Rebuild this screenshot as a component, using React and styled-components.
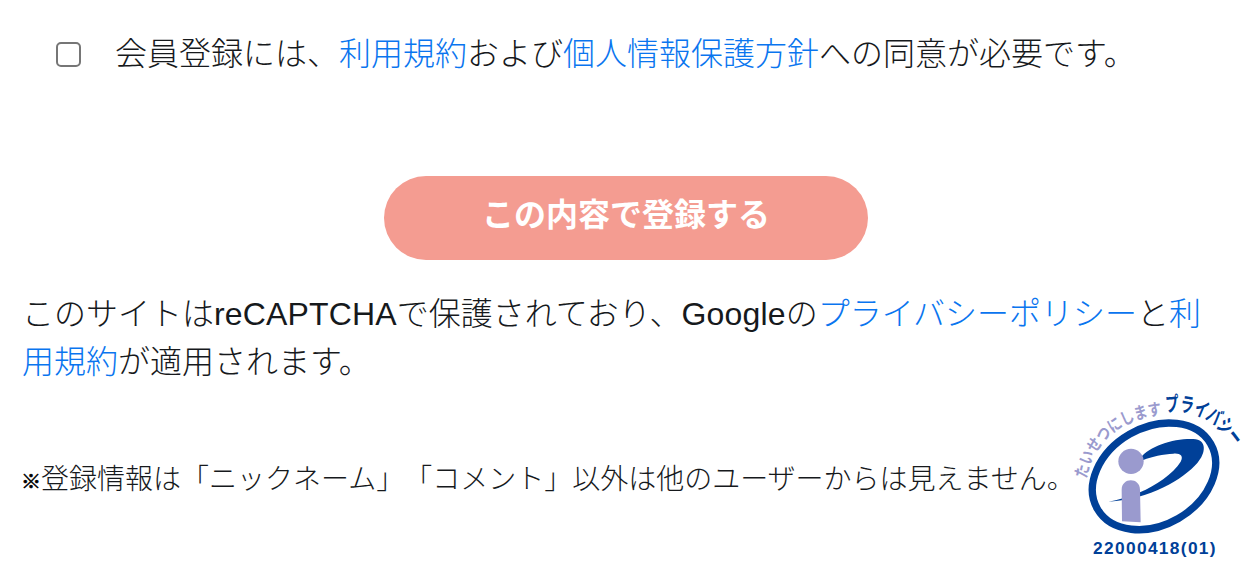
import React from "react";
import styled, { createGlobalStyle } from "styled-components";

const GlobalStyle = createGlobalStyle`
  html, body {
    margin: 0;
    padding: 0;
    background: #fff;
  }
  body {
    font-family: "Liberation Sans", "Noto Sans CJK JP", sans-serif;
    font-weight: 300;
    color: #16191c;
    overflow: hidden;
    text-spacing-trim: space-all;
  }
`;

const Page = styled.div`
  width: 1248px;
  height: 569px;
  box-sizing: border-box;
  padding: 30px 22px 0 22px;
`;

const Consent = styled.label`
  display: flex;
  align-items: center;
  gap: 34px;
  padding-left: 34px;
  font-size: 32px;
  line-height: 48px;
  height: 48px;
`;

const Box = styled.span`
  flex: none;
  width: 25px;
  height: 25px;
  box-sizing: border-box;
  border: 2px solid #767676;
  border-radius: 5px;
  background: #fff;
`;

const Link = styled.a`
  color: #0a75ef;
  text-decoration: none;
`;

const ButtonRow = styled.div`
  display: flex;
  justify-content: center;
  margin-top: 98px;
  padding-left: 4px;
`;

const Submit = styled.button`
  width: 484px;
  height: 84px;
  border: 0;
  border-radius: 42px;
  background: #f49c91;
  color: #fff;
  font-family: inherit;
  font-size: 32px;
  font-weight: 700;
  padding: 0 0 12px;
`;

const Notice = styled.p`
  margin: 30px 0 0;
  font-size: 32px;
  line-height: 48px;
`;

const Latin = styled.span`
  letter-spacing: 0.15px;
`;

const Footer = styled.div`
  display: flex;
  justify-content: space-between;
  align-items: flex-start;
  margin: -7px -22px 0 -1px;
`;

const Note = styled.p`
  flex: 1;
  min-width: 0;
  margin: 80px 0 0;
  font-size: 28px;
  line-height: 42px;
  white-space: nowrap;
`;

const Mark = styled.span`
  font-family: "Noto Sans CJK JP", sans-serif;
  font-size: 20px;
  font-weight: 900;
  color: #000;
  -webkit-text-stroke: 0.6px #000;
`;

const LogoSvg = styled.svg`
  flex: none;
  display: block;
  width: 188px;
  height: 189px;
`;

function PrivacyMark() {
  return (
    <LogoSvg viewBox="0 0 564 567">
      <defs>
        <path id="arcLeft" d="M80 300 C95 200 185 112 312 108" />
        <path id="arcRight" d="M318 100 C400 84 470 130 520 205" />
      </defs>
      <ellipse
        cx="282"
        cy="292"
        rx="196"
        ry="146"
        transform="rotate(-30 282 292)"
        fill="none"
        stroke="#004098"
        strokeWidth="22"
      />
      <path
        d="M240 238 C270 200 340 178 400 180 C442 182 438 222 412 252 C370 300 270 362 145 368 C175 363 200 355 240 340 C285 320 340 285 362 248 C372 230 360 222 340 224 C310 226 275 232 250 243 Z"
        fill="#004098"
      />
      <circle cx="213" cy="247" r="38" fill="#9a9ace" />
      <path
        d="M185 332 C185 294 240 294 240 332 L242 430 L186 427 Z"
        fill="#9a9ace"
      />
      <text
        fontFamily="'Noto Sans CJK JP', sans-serif"
        fontSize="50"
        fontWeight="700"
        fill="#9a9ace"
      >
        <textPath href="#arcLeft" textLength="320" lengthAdjust="spacingAndGlyphs">
          たいせつにします
        </textPath>
      </text>
      <text
        fontFamily="'Noto Sans CJK JP', sans-serif"
        fontSize="62"
        fontWeight="700"
        fill="#004098"
      >
        <textPath href="#arcRight" textLength="240" lengthAdjust="spacingAndGlyphs">
          プライバシー
        </textPath>
      </text>
      <text
        x="285"
        y="525"
        textAnchor="middle"
        fontFamily="'Liberation Sans', sans-serif"
        fontSize="52"
        fontWeight="700"
        letterSpacing="4"
        fill="#004098"
      >
        22000418(01)
      </text>
    </LogoSvg>
  );
}

export default function App() {
  return (
    <Page>
      <GlobalStyle />
      <Consent>
        <Box />
        <span>
          会員登録には、<Link href="#">利用規約</Link>および
          <Link href="#">個人情報保護方針</Link>への同意が必要です。
        </span>
      </Consent>
      <ButtonRow>
        <Submit>この内容で登録する</Submit>
      </ButtonRow>
      <Notice>
        このサイトは<Latin>reCAPTCHA</Latin>で保護されており、<Latin>Google</Latin>の
        <Link href="#">プライバシーポリシー</Link>と<Link href="#">利用規約</Link>
        が適用されます。
      </Notice>
      <Footer>
        <Note>
          <Mark>※</Mark>登録情報は「ニックネーム」「コメント」以外は他のユーザーからは見えません。
        </Note>
        <PrivacyMark />
      </Footer>
    </Page>
  );
}
